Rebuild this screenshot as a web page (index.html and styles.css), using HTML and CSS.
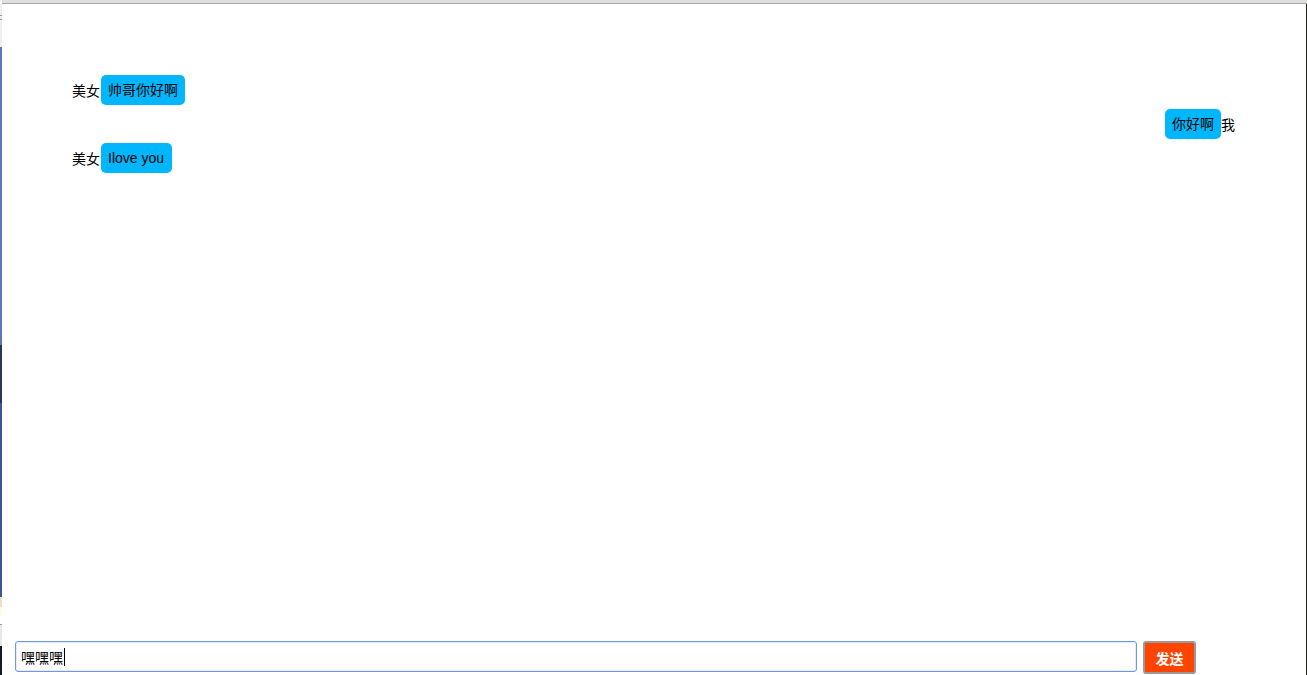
FILE: index.html
```html
<!DOCTYPE html>
<html lang="zh">
<head>
<meta charset="utf-8">
<title>聊天</title>
<link rel="stylesheet" href="styles.css">
</head>
<body>
<div class="screen">
  <div class="topbar"></div>
  <div class="body-row">
    <div class="left-strip">
      <div class="ls ls-a"></div>
      <div class="ls ls-line"></div>
      <div class="ls ls-a2"></div>
      <div class="ls ls-line"></div>
      <div class="ls ls-b"></div>
      <div class="ls ls-blue1"></div>
      <div class="ls ls-dark"></div>
      <div class="ls ls-blue2"></div>
      <div class="ls ls-beige"></div>
      <div class="ls ls-pale"></div>
      <div class="ls ls-white"></div>
      <div class="ls ls-line"></div>
      <div class="ls ls-gray"></div>
      <div class="ls ls-black"></div>
    </div>
    <div class="window">
      <div class="messages">
        <div class="msg left"><span class="name name-l">美女</span><span class="bubble">帅哥你好啊</span></div>
        <div class="msg right"><span class="bubble">你好啊</span><span class="name">我</span></div>
        <div class="msg left"><span class="name name-l">美女</span><span class="bubble bubble-en">Ilove you</span></div>
      </div>
      <div class="composer">
        <div class="input-wrap">
          <input class="text-input" type="text" value="嘿嘿嘿">
          <span class="caret"></span>
        </div>
        <button class="send-btn" type="button">发送</button>
      </div>
    </div>
    <div class="right-strip"></div>
  </div>
</div>
</body>
</html>
```
FILE: styles.css
```css
* { box-sizing: border-box; }
html, body { margin: 0; padding: 0; background: #fff; }
body {
  width: 1307px;
  height: 675px;
  overflow: hidden;
  font-family: "Liberation Sans", Arial, "Noto Sans CJK SC", sans-serif;
  font-size: 14px;
  color: #000;
}
.screen { display: flex; flex-direction: column; height: 675px; }
.topbar {
  height: 4px;
  margin-left: 2px;
  background: #dedede;
  border-bottom: 1px solid #a9a9a9;
  flex: none;
}
.body-row { flex: 1; display: flex; min-height: 0; }
.left-strip { width: 2px; flex: none; display: flex; flex-direction: column; }
.ls { flex: none; }
.ls-a { height: 11px; background: #efefef; }
.ls-line { height: 1px; background: #9a9a9a; }
.ls-a2 { height: 3px; background: #efefef; }
.ls-b { height: 27px; background: #efefef; }
.ls-blue1 { height: 298px; background: #5b78b4; }
.ls-dark { height: 58px; background: #2b3550; }
.ls-blue2 { height: 194px; background: #3d5692; }
.ls-beige { height: 10px; background: #e5e1cc; }
.ls-pale { height: 9px; background: #fffbe6; }
.ls-white { height: 8px; background: #ffffff; }
.ls-gray { height: 21px; background: #e8e8e8; }
.ls-black { flex: 1; background: #131a24; }
.right-strip { width: 1px; flex: none; background: #1f2318; }
.window {
  flex: 1;
  display: flex;
  flex-direction: column;
  min-width: 0;
}
.messages {
  flex: 1;
  padding: 71px 71px 0 70px;
  display: flex;
  flex-direction: column;
  gap: 4px;
}
.msg { display: flex; align-items: center; height: 30px; }
.msg.right { justify-content: flex-end; }
.name { line-height: 30px; font-family: "Noto Sans CJK SC", sans-serif; font-size: 14px; }
.name-l { margin-right: 1px; }
.bubble {
  background: #00b6fd;
  border-radius: 5px;
  padding: 0 7px;
  line-height: 30px;
  height: 30px;
  white-space: nowrap;
  font-family: "Liberation Sans", Arial, "Noto Sans CJK SC", sans-serif;
}
.bubble-en { padding: 0 8px 0 7px; }
.composer {
  display: flex;
  align-items: flex-start;
  gap: 6px;
  padding: 0 0 0 13px;
  height: 34px;
  flex: none;
}
.input-wrap { position: relative; width: 1122px; height: 31px; }
.text-input {
  width: 100%;
  height: 31px;
  border: 1px solid #6f98e0;
  border-radius: 3px;
  padding: 0 5px;
  font-family: "Noto Sans CJK SC", sans-serif;
  font-size: 14px;
  color: #000;
  outline: none;
  box-shadow: inset 0 0 0 1px #e3ebf9;
  background: #fff;
}
.caret {
  position: absolute;
  left: 49px;
  top: 7px;
  width: 1px;
  height: 18px;
  background: #000;
}
.send-btn {
  width: 53px;
  height: 33px;
  background: #ff4400;
  border: 2px solid #9a9a9a;
  border-radius: 3px;
  color: #fff;
  font-weight: bold;
  font-size: 14px;
  font-family: "Noto Sans CJK SC", sans-serif;
  padding: 0;
}
```
